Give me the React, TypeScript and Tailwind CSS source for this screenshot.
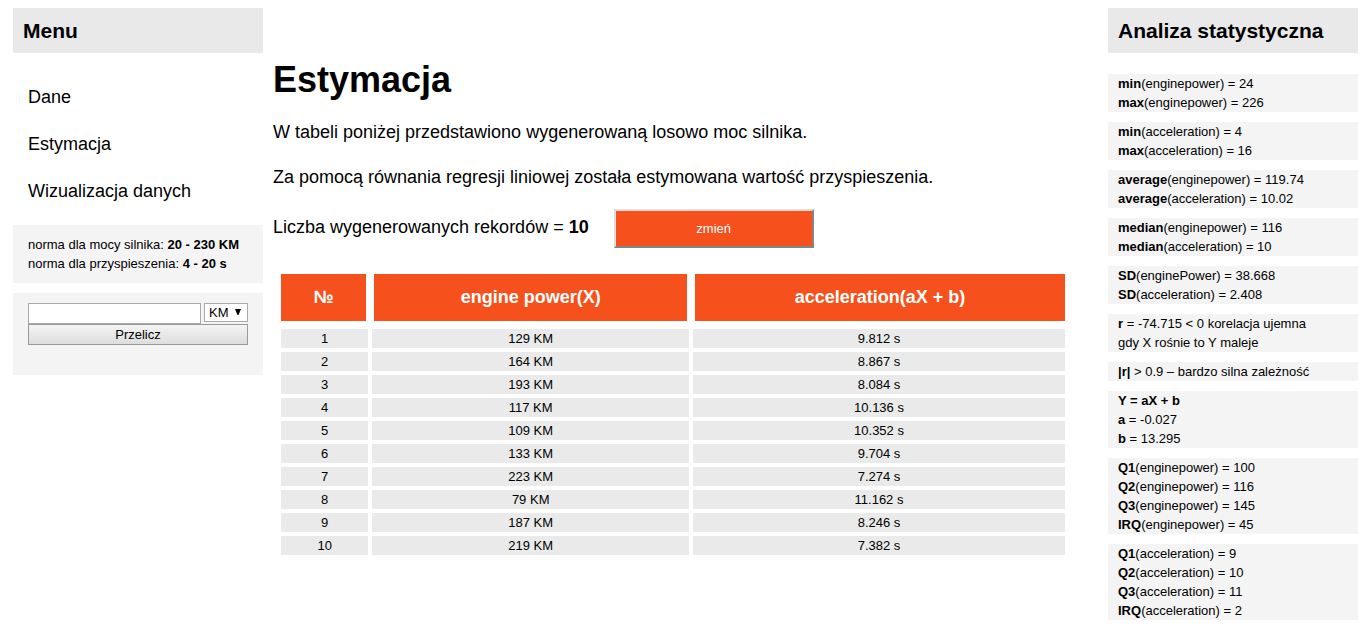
import type { ReactNode } from "react";

const menu = ["Dane", "Estymacja", "Wizualizacja danych"];

const rows = [
  [129, "9.812"],
  [164, "8.867"],
  [193, "8.084"],
  [117, "10.136"],
  [109, "10.352"],
  [133, "9.704"],
  [223, "7.274"],
  [79, "11.162"],
  [187, "8.246"],
  [219, "7.382"],
];

const stats: [string, string][][] = [
  [["min", "(enginepower) = 24"], ["max", "(enginepower) = 226"]],
  [["min", "(acceleration) = 4"], ["max", "(acceleration) = 16"]],
  [["average", "(enginepower) = 119.74"], ["average", "(acceleration) = 10.02"]],
  [["median", "(enginepower) = 116"], ["median", "(acceleration) = 10"]],
  [["SD", "(enginePower) = 38.668"], ["SD", "(acceleration) = 2.408"]],
  [["r", " = -74.715 < 0 korelacja ujemna"], ["", "gdy X rośnie to Y maleje"]],
  [["|r|", " > 0.9 – bardzo silna zależność"]],
  [["Y = aX + b", ""], ["a", " = -0.027"], ["b", " = 13.295"]],
  [
    ["Q1", "(enginepower) = 100"],
    ["Q2", "(enginepower) = 116"],
    ["Q3", "(enginepower) = 145"],
    ["IRQ", "(enginepower) = 45"],
  ],
  [
    ["Q1", "(acceleration) = 9"],
    ["Q2", "(acceleration) = 10"],
    ["Q3", "(acceleration) = 11"],
    ["IRQ", "(acceleration) = 2"],
  ],
];

function PanelTitle({ children }: { children: ReactNode }) {
  return (
    <h2 className="mb-[21px] bg-[#e9e9e9] px-2.5 py-2 text-[21px] leading-[29px] font-bold">
      {children}
    </h2>
  );
}

function Sidebar() {
  return (
    <aside className="text-[13px] leading-[19px]">
      <PanelTitle>Menu</PanelTitle>
      <nav className="mb-2.5 text-lg leading-[47px]">
        {menu.map((item) => (
          <a key={item} href="#" className="block px-[15px]">
            {item}
          </a>
        ))}
      </nav>
      <div className="mb-2.5 bg-[#f4f4f4] px-[15px] py-2.5">
        <p>
          norma dla mocy silnika: <b>20 - 230 KM</b>
        </p>
        <p>
          norma dla przyspieszenia: <b>4 - 20 s</b>
        </p>
      </div>
      <form className="bg-[#f4f4f4] px-[15px] pt-2.5 pb-[30px]" onSubmit={(e) => e.preventDefault()}>
        <div className="flex items-start gap-[3px]">
          <input
            type="text"
            aria-label="Moc"
            className="h-[21px] min-w-0 flex-1 border border-[#a9a9a9] bg-white px-1"
          />
          <div className="relative">
            <select
              aria-label="Jednostka"
              className="block h-[19px] w-11 appearance-none rounded-none border border-[#a9a9a9] bg-white pl-1 leading-[17px]"
            >
              <option>KM</option>
              <option>kW</option>
            </select>
            <svg
              viewBox="0 0 6 6"
              className="pointer-events-none absolute top-1.5 right-[7px] size-1.5"
              aria-hidden="true"
            >
              <path d="M0 0H6L3.5 6H2.5Z" fill="#000" />
            </svg>
          </div>
        </div>
        <button
          type="submit"
          className="block h-[21px] w-full border border-[#999] bg-linear-to-b from-[#f4f4f4] to-[#dddddd] leading-[19px]"
        >
          Przelicz
        </button>
      </form>
    </aside>
  );
}

function Estimation() {
  return (
    <main className="min-w-0 pt-12 text-lg leading-[25px]">
      <h1 className="mb-[17px] text-4xl leading-[47px] font-bold">Estymacja</h1>
      <p className="mb-5">W tabeli poniżej przedstawiono wygenerowaną losowo moc silnika.</p>
      <p className="mb-[19px]">
        Za pomocą równania regresji liniowej została estymowana wartość przyspieszenia.
      </p>
      <div className="mb-[26px] flex items-start gap-[25px]">
        <p className="pt-1.5">
          Liczba wygenerowanych rekordów = <b>10</b>
        </p>
        <button
          type="button"
          className="h-[39px] w-[200px] border-2 border-t-[#dcdcdc] border-r-[#868686] border-b-[#868686] border-l-[#dcdcdc] bg-[#f6511d] text-[13px] leading-[19px] text-white"
        >
          zmień
        </button>
      </div>
      <div className="pr-[33px] pl-2">
        <table className="w-full table-fixed border-separate border-spacing-0 text-center">
          <thead className="text-lg leading-[27px] text-white">
            <tr>
              <th className="w-[11.4%] border-r-4 border-b-8 border-white bg-[#f6511d] py-2.5">№</th>
              <th className="w-[40.9%] border-x-4 border-b-8 border-white bg-[#f6511d] py-2.5">
                engine power(X)
              </th>
              <th className="border-b-8 border-l-4 border-white bg-[#f6511d] py-2.5">
                acceleration(aX + b)
              </th>
            </tr>
          </thead>
          <tbody className="text-[13px] leading-[19px]">
            {rows.map(([power, time], i) => (
              <tr key={i}>
                <td className="border-r-2 border-b-4 border-white bg-[#eaeaea]">{i + 1}</td>
                <td className="border-x-2 border-b-4 border-white bg-[#eaeaea]">{power} KM</td>
                <td className="border-b-4 border-l-2 border-white bg-[#eaeaea]">{time} s</td>
              </tr>
            ))}
          </tbody>
        </table>
      </div>
    </main>
  );
}

function Statistics() {
  return (
    <aside className="text-[13px] leading-[19px]">
      <PanelTitle>Analiza statystyczna</PanelTitle>
      <div className="flex flex-col gap-2.5">
        {stats.map((group, i) => (
          <div key={i} className="bg-[#f4f4f4] px-2.5">
            {group.map(([name, rest]) => (
              <p key={name + rest}>
                <b>{name}</b>
                {rest}
              </p>
            ))}
          </div>
        ))}
      </div>
    </aside>
  );
}

export default function App() {
  return (
    <div className="grid grid-cols-[250px_minmax(0,1fr)_250px] gap-2.5 bg-white pt-2 pr-2 pl-[13px] font-['Liberation_Sans',Arial,sans-serif] text-black">
      <Sidebar />
      <Estimation />
      <Statistics />
    </div>
  );
}
